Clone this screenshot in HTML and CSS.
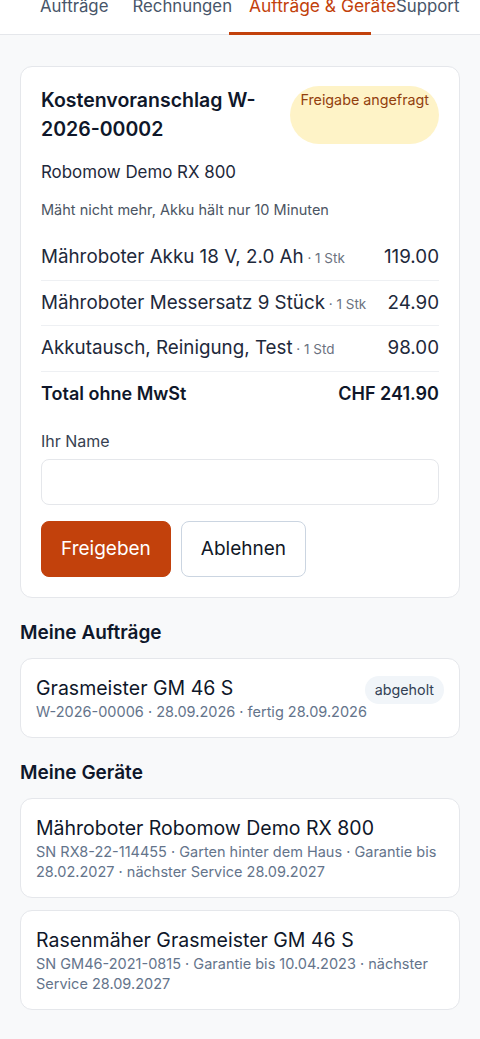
FILE: index.html
```html
<!DOCTYPE html>
<html lang="de">
<head>
    <meta charset="UTF-8">
    <meta name="viewport" content="width=device-width, initial-scale=1.0">
    <title>Kundenportal</title>
    <link rel="stylesheet" href="styles.css">
</head>
<body>
    <nav class="tabs">
        <a class="tab tab-orders">Aufträge</a>
        <a class="tab tab-invoices">Rechnungen</a>
        <a class="tab tab-devices active">Aufträge &amp; Geräte</a>
        <a class="tab tab-support">Support</a>
    </nav>
    <main class="page">
        <section class="card quote">
            <div class="quote-head">
                <h2 class="quote-title">Kostenvoranschlag W-2026-00002</h2>
                <span class="badge badge-pending">Freigabe angefragt</span>
            </div>
            <p class="quote-device">Robomow Demo RX 800</p>
            <p class="quote-note">Mäht nicht mehr, Akku hält nur 10 Minuten</p>
            <div class="lines">
                <div class="line">
                    <span>Mähroboter Akku 18 V, 2.0 Ah<small> · 1 Stk</small></span>
                    <span>119.00</span>
                </div>
                <div class="line">
                    <span>Mähroboter Messersatz 9 Stück<small> · 1 Stk</small></span>
                    <span>24.90</span>
                </div>
                <div class="line">
                    <span>Akkutausch, Reinigung, Test<small> · 1 Std</small></span>
                    <span>98.00</span>
                </div>
                <div class="line total">
                    <span>Total ohne MwSt</span>
                    <span>CHF 241.90</span>
                </div>
            </div>
            <label class="field-label" for="name">Ihr Name</label>
            <input class="field" id="name" type="text">
            <div class="actions">
                <button class="btn btn-primary">Freigeben</button>
                <button class="btn btn-secondary">Ablehnen</button>
            </div>
        </section>

        <h3 class="section-title">Meine Aufträge</h3>
        <div class="card item">
            <div class="item-head">
                <div class="item-title">Grasmeister GM 46 S</div>
                <span class="badge badge-done">abgeholt</span>
            </div>
            <div class="item-meta">W-2026-00006 · 28.09.2026 · fertig 28.09.2026</div>
        </div>

        <h3 class="section-title">Meine Geräte</h3>
        <div class="list">
            <div class="card item">
                <div class="item-title">Mähroboter Robomow Demo RX 800</div>
                <div class="item-meta">SN RX8-22-114455 · Garten hinter dem Haus · Garantie bis 28.02.2027 · nächster Service 28.09.2027</div>
            </div>
            <div class="card item">
                <div class="item-title">Rasenmäher Grasmeister GM 46 S</div>
                <div class="item-meta">SN GM46-2021-0815 · Garantie bis 10.04.2023 · nächster Service 28.09.2027</div>
            </div>
        </div>
    </main>
</body>
</html>
```
FILE: styles.css
```css
body {
    margin: 0;
    background-color: #f8f9fa;
    color: #111827;
    font-family: Inter, "Noto Sans", sans-serif;
    overflow: hidden;
}
.tabs {
    display: flex;
    height: 40px;
    margin-top: -6px;
    padding-left: 40px;
    background-color: #fff;
    border-bottom: 1px solid #e5e7eb;
    white-space: nowrap;
}
.tab {
    display: block;
    box-sizing: border-box;
    font-size: 16.8px;
    line-height: 24px;
    color: #475569;
    cursor: pointer;
}
.tab-orders {
    margin-right: 24px;
}
.tab-invoices {
    margin-right: -3px;
}
.tab.active {
    flex-shrink: 0;
    width: 142px;
    height: 41px;
    padding-left: 20px;
    font-size: 17.4px;
    color: #c2410c;
    border-bottom: 3px solid #c2410c;
}
.tab-support {
    margin-left: 25px;
}
.page {
    padding: 31px 20px 40px;
}
.card {
    background-color: #fff;
    border: 1px solid #e5e7eb;
    border-radius: 12px;
}
.quote {
    padding: 19px 20px 20px;
}
.quote-head {
    display: flex;
    gap: 14px;
}
.quote-title {
    flex: 1;
    margin: 0;
    font-size: 19.5px;
    font-weight: 600;
    line-height: 29px;
    color: #0f172a;
}
.badge {
    border-radius: 999px;
    font-size: 14.3px;
    line-height: 20px;
    padding: 4px 10px;
}
.badge-pending {
    background-color: #fef3c7;
    color: #92400e;
}
.badge-done {
    align-self: flex-start;
    margin-bottom: -4px;
    background-color: #f1f5f9;
    color: #334155;
}
.quote-device {
    margin: 16px 0 0;
    font-size: 16.9px;
    line-height: 24px;
    color: #1e293b;
}
.quote-note {
    margin: 16px 0 0;
    font-size: 14.5px;
    line-height: 20px;
    color: #4b5563;
}
.lines {
    margin-top: 15px;
}
.line {
    display: flex;
    justify-content: space-between;
    align-items: baseline;
    padding: 9px 0 9.5px;
    border-bottom: 1px solid #eef0f3;
    font-size: 18.8px;
    line-height: 26px;
    color: #1e293b;
}
.line small {
    font-size: 13.5px;
    line-height: 1;
    color: #6b7280;
}
.line.total {
    border-bottom: none;
    font-size: 18px;
    font-weight: 600;
    color: #0f172a;
}
.field-label {
    display: block;
    margin-top: 14px;
    font-size: 16px;
    line-height: 22px;
    color: #374151;
}
.field {
    display: block;
    box-sizing: border-box;
    width: 100%;
    height: 46px;
    margin-top: 7px;
    border: 1px solid #e5e7eb;
    border-radius: 8px;
    font: inherit;
}
.actions {
    display: flex;
    gap: 10px;
    margin-top: 16px;
}
.btn {
    padding: 15px 19px;
    border-radius: 8px;
    font-family: inherit;
    font-size: 19px;
    line-height: 24px;
    cursor: pointer;
}
.btn-primary {
    background-color: #c2410c;
    border: 1px solid #c2410c;
    color: #fff;
}
.btn-secondary {
    background-color: #fff;
    border: 1px solid #cbd5e1;
    color: #111827;
}
.section-title {
    margin: 23px 0 13px;
    font-size: 19px;
    font-weight: 600;
    line-height: 24px;
    color: #0f172a;
}
.item {
    padding: 17px 15px 15px;
}
.item-head {
    display: flex;
    justify-content: space-between;
    gap: 12px;
}
.item-title {
    font-size: 19.5px;
    line-height: 24px;
    color: #0f172a;
}
.item-meta {
    margin-top: 2px;
    font-size: 14.5px;
    line-height: 20px;
    color: #64748b;
}
.list {
    display: flex;
    flex-direction: column;
    gap: 12px;
}
```
